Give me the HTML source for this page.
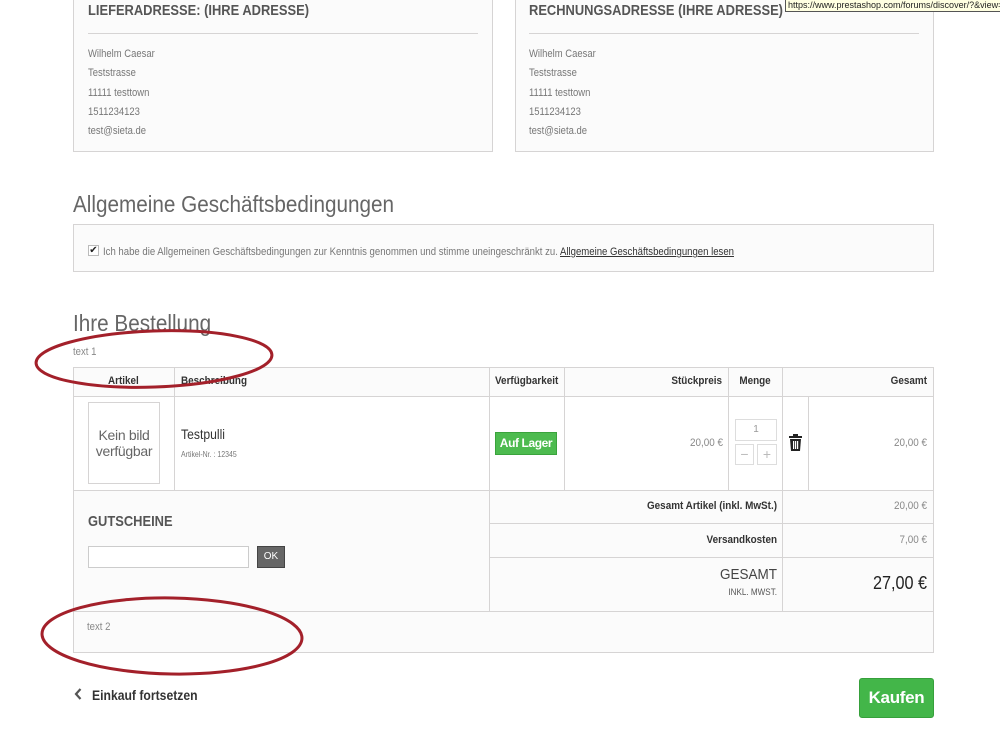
<!DOCTYPE html>
<html><head><meta charset="utf-8"><style>
*{margin:0;padding:0;box-sizing:border-box}
body{width:1000px;height:750px;background:#fff;position:relative;overflow:hidden;font-family:"Liberation Sans",sans-serif;color:#777}
.a{position:absolute}
.box{position:absolute;background:#fbfbfb;border:1px solid #d6d4d4}
.h3{font-family:"Liberation Sans",sans-serif;font-weight:bold;color:#555;font-size:15px;transform:scaleX(.86);transform-origin:left;white-space:nowrap}
.ln{position:absolute;font-size:11px;color:#777;transform:scaleX(.86);transform-origin:left}
.hl{position:absolute;background:#d6d4d4}
.th{position:absolute;font-size:11px;font-weight:bold;color:#333;top:375px;transform:scaleX(.9);white-space:nowrap}
.t{position:absolute;font-size:11px;white-space:nowrap}
.n{transform:scaleX(.87);transform-origin:left}
.r{text-align:right;transform:scaleX(.9);transform-origin:right}
</style></head><body>

<div class="box" style="left:73px;top:-2px;width:420px;height:154px"></div>
<div class="box" style="left:515px;top:-2px;width:419px;height:154px"></div>
<div class="a h3" style="left:88px;top:2px">LIEFERADRESSE: (IHRE ADRESSE)</div>
<div class="a h3" style="left:529px;top:2px">RECHNUNGSADRESSE (IHRE ADRESSE)</div>
<div class="hl" style="left:88px;top:33px;width:390px;height:1px"></div>
<div class="hl" style="left:529px;top:33px;width:390px;height:1px"></div>
<div class="ln" style="left:88px;top:45px;line-height:19.3px">Wilhelm Caesar<br>Teststrasse<br>11111 testtown<br>1511234123<br>test@sieta.de</div>
<div class="ln" style="left:529px;top:45px;line-height:19.3px">Wilhelm Caesar<br>Teststrasse<br>11111 testtown<br>1511234123<br>test@sieta.de</div>

<div class="a" style="left:785px;top:-1px;width:230px;height:13px;background:#ffffe1;border:1px solid #555;font-size:9px;color:#222;padding-left:2px;line-height:11px;white-space:nowrap">https://www.prestashop.com/forums/discover/?&amp;view=cond</div>

<div class="a n" style="left:73px;top:191px;font-size:23px;color:#666;white-space:nowrap;transform:scaleX(.9)">Allgemeine Geschäftsbedingungen</div>
<div class="box" style="left:73px;top:224px;width:861px;height:48px"></div>
<div class="a" style="left:88px;top:245px;width:11px;height:11px;border:1px solid #bbb;background:#fff;font-size:10px;line-height:9px;color:#222;text-align:center">✔</div>
<div class="t n" style="left:103px;top:246px;color:#777">Ich habe die Allgemeinen Geschäftsbedingungen zur Kenntnis genommen und stimme uneingeschränkt zu. <span style="color:#333;text-decoration:underline">Allgemeine Geschäftsbedingungen lesen</span></div>

<div class="a" style="left:73px;top:310px;font-size:23px;color:#666;white-space:nowrap;transform:scaleX(.9);transform-origin:left">Ihre Bestellung</div>
<div class="t n" style="left:73px;top:346px;color:#888">text 1</div>

<div class="box" style="left:73px;top:367px;width:861px;height:286px"></div>
<div class="a" style="left:74px;top:397px;width:859px;height:94px;background:#fff"></div>
<div class="hl" style="left:73px;top:396px;width:861px;height:1px"></div>
<div class="hl" style="left:73px;top:490px;width:861px;height:1px"></div>
<div class="hl" style="left:489px;top:523px;width:445px;height:1px"></div>
<div class="hl" style="left:489px;top:557px;width:445px;height:1px"></div>
<div class="hl" style="left:73px;top:611px;width:861px;height:1px"></div>
<div class="hl" style="left:174px;top:367px;width:1px;height:124px"></div>
<div class="hl" style="left:489px;top:367px;width:1px;height:245px"></div>
<div class="hl" style="left:564px;top:367px;width:1px;height:124px"></div>
<div class="hl" style="left:728px;top:367px;width:1px;height:124px"></div>
<div class="hl" style="left:782px;top:367px;width:1px;height:245px"></div>
<div class="hl" style="left:808px;top:397px;width:1px;height:94px"></div>

<div class="th" style="left:108px;transform-origin:left">Artikel</div>
<div class="th" style="left:181px;transform-origin:left">Beschreibung</div>
<div class="th" style="left:495px;transform-origin:left">Verfügbarkeit</div>
<div class="th" style="left:600px;width:122px;text-align:right;transform-origin:right">Stückpreis</div>
<div class="th" style="left:728px;width:54px;text-align:center">Menge</div>
<div class="th" style="left:820px;width:107px;text-align:right;transform-origin:right">Gesamt</div>

<div class="a" style="left:88px;top:402px;width:72px;height:82px;border:1px solid #d6d4d4;background:#fff;font-size:14px;color:#666;text-align:center;padding-top:24px;line-height:16px;letter-spacing:-0.3px">Kein bild<br>verfügbar</div>
<div class="a n" style="left:181px;top:426px;font-size:14px;color:#333">Testpulli</div>
<div class="a n" style="left:181px;top:450px;font-size:8px;color:#777;white-space:nowrap">Artikel-Nr. : 12345</div>
<div class="a" style="left:495px;top:432px;width:62px;height:23px;background:#4dbb4f;border:1px solid #3aa33c;color:#fff;font-size:12px;font-weight:bold;text-align:center;line-height:21px;letter-spacing:-0.4px">Auf Lager</div>
<div class="t r" style="left:650px;width:73px;top:437px;color:#888;font-size:11px">20,00 €</div>
<div class="a" style="left:735px;top:419px;width:42px;height:22px;border:1px solid #ddd;background:#fff;font-size:10px;color:#999;text-align:center;line-height:20px">1</div>
<div class="a" style="left:735px;top:444px;width:19px;height:21px;border:1px solid #ddd;background:#fff;color:#bbb;text-align:center;line-height:19px;font-size:14px">−</div>
<div class="a" style="left:757px;top:444px;width:20px;height:21px;border:1px solid #ddd;background:#fff;color:#bbb;text-align:center;line-height:19px;font-size:14px">+</div>
<svg class="a" style="left:789px;top:434px" width="13" height="17" viewBox="0 0 13 17"><rect x="0" y="2" width="13" height="2" fill="#222"/><rect x="4" y="0" width="5" height="2" fill="#222"/><path d="M1 5h11l-1 12H2z" fill="#222"/><rect x="4" y="7" width="1.2" height="8" fill="#fff"/><rect x="6" y="7" width="1.2" height="8" fill="#fff"/><rect x="8" y="7" width="1.2" height="8" fill="#fff"/></svg>
<div class="t r" style="left:850px;width:77px;top:437px;color:#888;font-size:11px">20,00 €</div>

<div class="a h3" style="left:88px;top:513px;font-size:15px">GUTSCHEINE</div>
<div class="a" style="left:88px;top:546px;width:161px;height:22px;border:1px solid #ccc;background:#fff"></div>
<div class="a" style="left:257px;top:546px;width:28px;height:22px;background:#666;border:1px solid #444;color:#fff;font-size:10px;text-align:center;line-height:20px">OK</div>

<div class="t r" style="left:560px;width:217px;top:500px;font-weight:bold;color:#333;font-size:11px">Gesamt Artikel (inkl. MwSt.)</div>
<div class="t r" style="left:850px;width:77px;top:500px;color:#888;font-size:11px">20,00 €</div>
<div class="t r" style="left:600px;width:177px;top:534px;font-weight:bold;color:#333;font-size:11px">Versandkosten</div>
<div class="t r" style="left:850px;width:77px;top:534px;color:#888;font-size:11px">7,00 €</div>
<div class="a r" style="left:650px;top:566px;width:127px;font-size:15px;color:#444">GESAMT</div>
<div class="a r" style="left:650px;top:587px;width:127px;font-size:9px;color:#555">INKL. MWST.</div>
<div class="a r" style="left:800px;top:573px;width:127px;font-size:18px;color:#222">27,00 €</div>

<div class="t n" style="left:87px;top:621px;color:#888">text 2</div>

<svg class="a" style="left:74px;top:688px" width="8" height="12" viewBox="0 0 8 12"><path d="M6.5 1L2 6l4.5 5" fill="none" stroke="#555" stroke-width="2.2"/></svg>
<div class="a n" style="left:92px;top:687px;font-size:14px;font-weight:bold;color:#333;white-space:nowrap">Einkauf fortsetzen</div>
<div class="a" style="left:859px;top:678px;width:75px;height:40px;background:#43b649;border:1px solid #36a03b;border-radius:3px;color:#fff;font-size:17px;font-weight:bold;text-align:center;line-height:38px;letter-spacing:-0.3px">Kaufen</div>

<svg class="a" style="left:0;top:0" width="1000" height="750">
<ellipse cx="154" cy="359" rx="118" ry="28" transform="rotate(-2 154 359)" fill="none" stroke="#a3202a" stroke-width="3"/>
<ellipse cx="172" cy="636" rx="130" ry="38" transform="rotate(1 172 636)" fill="none" stroke="#a3202a" stroke-width="3"/>
</svg>
</body></html>
